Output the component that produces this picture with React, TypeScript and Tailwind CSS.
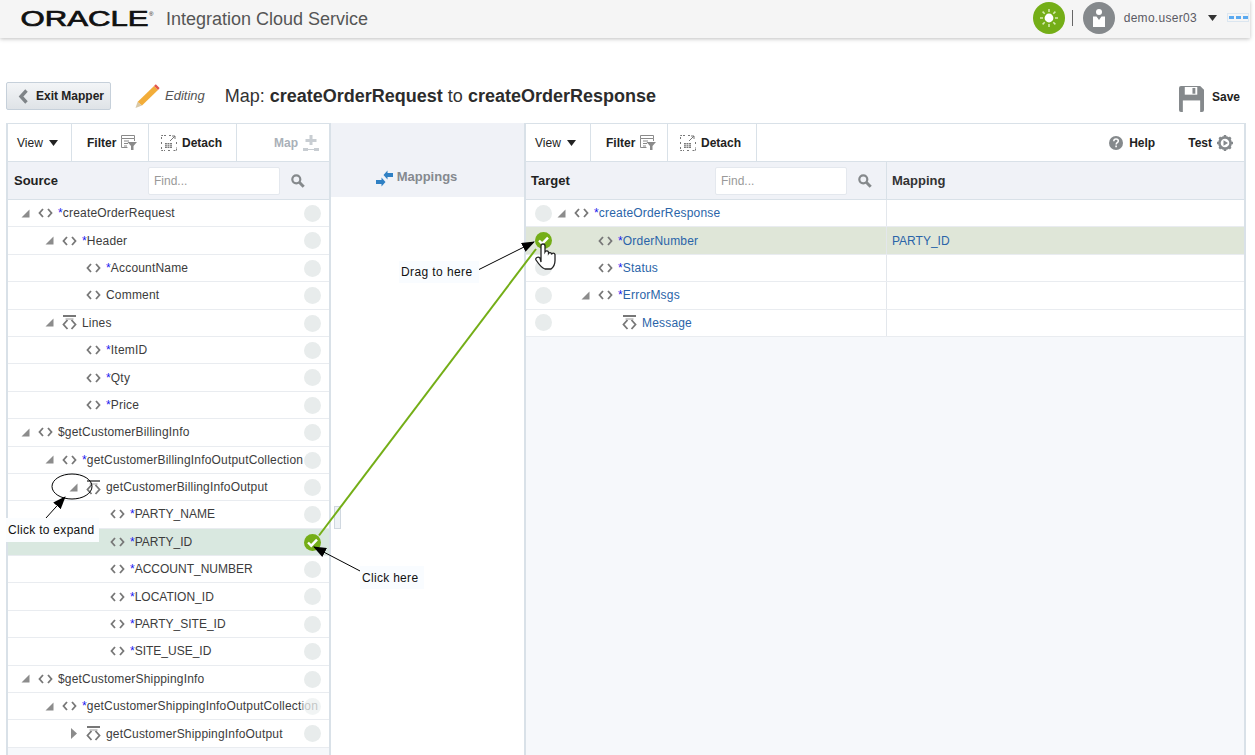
import { ReactNode } from 'react';

const FONT = "font-['Liberation_Sans',Arial,sans-serif]";

type TreeRow = {
  label: string;
  star?: boolean;
  level: number;
  arrow?: 'open' | 'closed';
  icon?: 'code' | 'list';
  active?: boolean;
  fade?: boolean;
};

const SOURCE_ROWS: TreeRow[] = [
  { label: 'createOrderRequest', star: true, level: 0, arrow: 'open' },
  { label: 'Header', star: true, level: 1, arrow: 'open' },
  { label: 'AccountName', star: true, level: 2 },
  { label: 'Comment', level: 2 },
  { label: 'Lines', level: 1, arrow: 'open', icon: 'list' },
  { label: 'ItemID', star: true, level: 2 },
  { label: 'Qty', star: true, level: 2 },
  { label: 'Price', star: true, level: 2 },
  { label: '$getCustomerBillingInfo', level: 0, arrow: 'open' },
  { label: 'getCustomerBillingInfoOutputCollection', star: true, level: 1, arrow: 'open' },
  { label: 'getCustomerBillingInfoOutput', level: 2, arrow: 'open', icon: 'list' },
  { label: 'PARTY_NAME', star: true, level: 3 },
  { label: 'PARTY_ID', star: true, level: 3, active: true },
  { label: 'ACCOUNT_NUMBER', star: true, level: 3 },
  { label: 'LOCATION_ID', star: true, level: 3 },
  { label: 'PARTY_SITE_ID', star: true, level: 3 },
  { label: 'SITE_USE_ID', star: true, level: 3 },
  { label: '$getCustomerShippingInfo', level: 0, arrow: 'open' },
  { label: 'getCustomerShippingInfoOutputCollection', star: true, level: 1, arrow: 'open', fade: true },
  { label: 'getCustomerShippingInfoOutput', level: 2, arrow: 'closed', icon: 'list' },
];

const TARGET_ROWS: (TreeRow & { mapping?: string })[] = [
  { label: 'createOrderResponse', star: true, level: 0, arrow: 'open' },
  { label: 'OrderNumber', star: true, level: 1, active: true, mapping: 'PARTY_ID' },
  { label: 'Status', star: true, level: 1 },
  { label: 'ErrorMsgs', star: true, level: 1, arrow: 'open' },
  { label: 'Message', level: 2, icon: 'list' },
];

const INDENT = ['pl-0', 'pl-[24px]', 'pl-[48px]', 'pl-[72px]'];

const CodeIcon = () => (
  <svg width="15" height="10" viewBox="0 0 15 10" className="shrink-0">
    <path d="M5 1 1.5 5 5 9M10 1l3.5 4L10 9" fill="none" stroke="#777" strokeWidth="1.8" />
  </svg>
);

const ListIcon = () => (
  <svg width="15" height="15" viewBox="0 0 15 15" className="shrink-0">
    <path d="M1 0h13v2H1z" fill="#777" />
    <path d="M3.5 4h8" stroke="#999" strokeWidth="1" />
    <path d="M5.5 5 1.5 9.5l4 4.5M9.5 5l4 4.5-4 4.5" fill="none" stroke="#777" strokeWidth="1.8" />
  </svg>
);

const Arrow = ({ kind }: { kind?: 'open' | 'closed' }) => (
  <span className="w-[17px] h-[10px] shrink-0 flex items-center">
    {kind === 'open' && (
      <svg width="9" height="9" viewBox="0 0 9 9">
        <path d="M8.5 0.5v8H0.5z" fill="#8c8c8c" />
      </svg>
    )}
    {kind === 'closed' && (
      <svg width="6" height="11" viewBox="0 0 6 11" className="ml-[2px]">
        <path d="M0 0l6 5.5L0 11z" fill="#8c8c8c" />
      </svg>
    )}
  </span>
);

const Dot = ({ checked }: { checked?: boolean }) =>
  checked ? (
    <svg width="17" height="17" viewBox="0 0 17 17">
      <circle cx="8.5" cy="8.5" r="8.5" fill="#74ae17" />
      <path d="M4 8.5l3.2 3.2L13 5.6" fill="none" stroke="#fff" strokeWidth="2.4" />
    </svg>
  ) : (
    <span className="block w-[17px] h-[17px] rounded-full bg-[#e8ecec]" />
  );

const RowLabel = ({ row, blue }: { row: TreeRow; blue?: boolean }) => (
  <div className={`flex items-center min-w-0 ${INDENT[row.level]}`}>
    <Arrow kind={row.arrow} />
    <span className="w-[20px] shrink-0 flex items-center">
      {row.icon === 'list' ? <ListIcon /> : <CodeIcon />}
    </span>
    <span
      className={`whitespace-nowrap text-[12px] ${row.label === row.label.toUpperCase() ? '' : 'tracking-[0.18px]'} ${
        blue ? 'text-[#2a64a8]' : 'text-[#3c3c3c]'
      }`}
    >
      {row.star && <span className="text-[#1a1aee]">*</span>}
      {row.label}
    </span>
  </div>
);

const SourceRow = ({ row }: { row: TreeRow }) => (
  <div className={`relative flex items-center h-[27.4px] shrink-0 pl-[13px] border-b border-[#e9ecf0] overflow-hidden ${row.active ? 'bg-[#d9e8e0]' : 'bg-white'}`}>
    <RowLabel row={row} />
    {row.fade && <span className="absolute right-0 top-0 bottom-0 w-[27px] bg-white/40" />}
    <span className={`absolute right-[8px] top-[5px] ${row.fade ? 'opacity-60' : ''}`}>
      <Dot checked={row.active} />
    </span>
  </div>
);

const TargetRow = ({ row }: { row: TreeRow & { mapping?: string } }) => (
  <div className={`flex h-[27.4px] shrink-0 border-b border-[#e9ecf0] ${row.active ? 'bg-[#dfe6d8]' : 'bg-white'}`}>
    <div className="w-[361px] flex items-center pl-[9px] border-r border-[#e3e7ec]">
      <span className="w-[22px] shrink-0 flex">
        <Dot checked={row.active} />
      </span>
      <RowLabel row={row} blue />
    </div>
    <div className="flex-1 flex items-center pl-[5px] text-[12px] text-[#2a64a8]">{row.mapping}</div>
  </div>
);

const ToolBtn = ({ children, className = '' }: { children: ReactNode; className?: string }) => (
  <div className={`flex items-center h-full border-r border-[#d9e1e8] text-[12px] font-bold text-[#222] ${className}`}>{children}</div>
);

const FilterIcon = () => (
  <svg width="16" height="15" viewBox="0 0 16 15" className="ml-[5px]">
    <path d="M.5.5h13v3H.5zM.5 3.5v9h6M3 6h5M3 8.5h4M3 11h3M13.5 3.5V6" fill="none" stroke="#8a8a8a" />
    <path d="M6.5 7H16l-3.5 4v4h-2.5v-4z" fill="#8a8a8a" />
  </svg>
);

const DetachIcon = () => (
  <svg width="16" height="16" viewBox="0 0 16 16" className="mr-[5px]">
    <path d="M.5 4V.5H5M8 .5h3M.5 7v3M.5 12v3.5H4M7 15.5h3M12.5 15.5h3V12M15.5 9V6" fill="none" stroke="#777" strokeDasharray="2 1" />
    <path d="M9 6l5-5M11 1h3v3" fill="none" stroke="#777" />
    <path d="M4 8h7v5H4z" fill="#777" />
    <path d="M4 9.6h7M4 11.3h7M6.3 8v5M8.6 8v5" stroke="#fff" strokeWidth=".6" />
  </svg>
);

const SearchIcon = () => (
  <svg width="14" height="14" viewBox="0 0 14 14" className="ml-[11px]">
    <circle cx="5.3" cy="5.3" r="4" fill="none" stroke="#85898c" strokeWidth="2.2" />
    <path d="M8.5 8.5l4.2 4.2" stroke="#85898c" strokeWidth="3" />
  </svg>
);

const Toolbar = ({ children }: { children: ReactNode }) => (
  <div className="flex items-center h-[38px] shrink-0 bg-white border-b border-[#d9e1e8]">{children}</div>
);

const ViewBtn = ({ width }: { width: string }) => (
  <ToolBtn className={`${width} pl-[9px]`}>
    <span className="font-normal">View</span>
    <svg width="9" height="6" viewBox="0 0 9 6" className="ml-[6px]">
      <path d="M0 0h9L4.5 6z" fill="#222" />
    </svg>
  </ToolBtn>
);

const FindBox = ({ width }: { width: string }) => (
  <div className={`h-[28px] ${width} bg-white border border-[#e4e8ee] rounded-[2px] flex items-center pl-[5px] text-[12px] text-[#999]`}>Find...</div>
);

export default function App() {
  return (
    <div className={`relative w-[1255px] h-[755px] overflow-hidden bg-white ${FONT}`}>
      <header className="w-[1250px] h-[38px] bg-[#f5f5f5] shadow-[0_1px_4px_rgba(0,0,0,0.25)] flex items-center pl-[21px]">
        <svg width="134" height="24" viewBox="0 0 134 24" className="shrink-0 overflow-visible">
          <text x="-0.5" y="19" fontSize="22" fontWeight="400" fill="#111" stroke="#111" strokeWidth="0.7" textLength="128" lengthAdjust="spacingAndGlyphs" fontFamily="Liberation Sans">ORACLE</text>
          <text x="128" y="9" fontSize="6" fill="#111" fontFamily="Liberation Sans">®</text>
        </svg>
        <span className="ml-[11px] text-[18px] text-[#555]">Integration Cloud Service</span>
        <div className="ml-auto mr-[1px] mb-[3px] flex items-center">
          <span className="w-[32px] h-[32px] rounded-full bg-[#74ae17] flex items-center justify-center">
            <svg width="20" height="20" viewBox="0 0 20 20">
              <circle cx="10" cy="10" r="4.4" fill="#fff" />
              <path d="M10 1v3M10 16v3M1 10h3M16 10h3M3.6 3.6l2.1 2.1M14.3 14.3l2.1 2.1M3.6 16.4l2.1-2.1M14.3 5.7l2.1-2.1" stroke="#d6ebb0" strokeWidth="1.5" />
            </svg>
          </span>
          <span className="ml-[7px] w-px h-[16px] bg-[#666]" />
          <span className="ml-[10px] w-[32px] h-[32px] rounded-full bg-[#85898c] flex items-center justify-center">
            <svg width="14" height="20" viewBox="0 0 14 20">
              <circle cx="7" cy="4" r="3" fill="#fff" />
              <path d="M1 8.5h3.5L7 12l2.5-3.5H13V19H1z" fill="#fff" />
            </svg>
          </span>
          <span className="ml-[9px] text-[12px] tracking-[0.3px] text-[#5a5a64]">demo.user03</span>
          <svg width="9" height="6" viewBox="0 0 9 6" className="ml-[11px]">
            <path d="M0 0h9L4.5 6z" fill="#333" />
          </svg>
          <span className="ml-[10px] w-[22px] h-[9px] border border-[#dbe6f0] flex items-center justify-center gap-[2px]">
            <span className="w-[5px] h-[3px] bg-[#5aa9f0]" />
            <span className="w-[5px] h-[3px] bg-[#5aa9f0]" />
            <span className="w-[5px] h-[3px] bg-[#5aa9f0]" />
          </span>
        </div>
      </header>

      <div className="flex items-center mt-[44px] h-[28px] pl-[6px] w-[1240px]">
        <button className="w-[105px] h-[28px] flex items-center pl-[11px] bg-gradient-to-b from-[#f3f5f7] to-[#dfe3e7] border border-[#c6d0da] rounded-[2px] text-[12px] font-bold text-[#222]">
          <svg width="11" height="15" viewBox="0 0 11 15" className="mr-[7px]">
            <path d="M8.5 1.5 3 7.5l5.5 6" fill="none" stroke="#7f8488" strokeWidth="3.4" />
          </svg>
          Exit Mapper
        </button>
        <svg width="26" height="26" viewBox="0 0 26 26" className="ml-[23px]">
          <path d="M20 3 24 7 8 22.5 3.5 19z" fill="#f2ad3a" />
          <path d="M20 3l1.8-1.8L25.6 5 24 7z" fill="#e2574c" />
          <path d="M3.5 19 8 22.5 1.5 25z" fill="#d9c9a8" />
        </svg>
        <span className="ml-[5px] text-[13px] italic text-[#555]">Editing</span>
        <span className="ml-[20px] text-[18px] text-[#333]">
          Map: <b className="text-[#2c2c2c]">createOrderRequest</b> to <b className="text-[#2c2c2c]">createOrderResponse</b>
        </span>
        <svg width="25" height="26" viewBox="0 0 26 27" className="ml-auto mt-[6px]">
          <path d="M2 0h20l4 4v21a2 2 0 0 1-2 2H2a2 2 0 0 1-2-2V2a2 2 0 0 1 2-2z" fill="#85898c" />
          <path d="M6 1h13v8H6z" fill="#fff" />
          <path d="M14 2h3v6h-3z" fill="#85898c" />
          <path d="M4 15h18v12H4z" fill="#fff" />
        </svg>
        <span className="ml-[8px] mt-[2px] text-[12px] font-bold text-[#222]">Save</span>
      </div>

      <div className="flex mt-[13px] ml-[6px] w-[1240px] h-[632px]">
        <section className="w-[325px] border-x-2 border-t border-[#d9e1e8] flex flex-col bg-[#f6f8fb]">
          <Toolbar>
            <ViewBtn width="w-[64px]" />
            <ToolBtn className="w-[77px] pl-[15px]">
              Filter
              <FilterIcon />
            </ToolBtn>
            <ToolBtn className="w-[88px] pl-[12px]">
              <DetachIcon />
              Detach
            </ToolBtn>
            <div className="flex-1 flex items-center justify-end pr-[10px] text-[12px] font-bold text-[#a9b0b8]">
              Map
              <svg width="16" height="16" viewBox="0 0 16 16" className="ml-[5px]">
                <path d="M6.5 0h3v4h4v3h-4v3h-3V7h-4V4h4zM0 13h5v3H0zM11 13h5v3h-5zM5 14h6v1H5z" fill="#c8cdd2" />
              </svg>
            </div>
          </Toolbar>
          <div className="h-[38px] shrink-0 flex items-center pl-[6px] bg-[#f0f2f7] border-b border-[#d9e1e8]">
            <span className="w-[134px] text-[13px] font-bold text-[#222]">Source</span>
            <FindBox width="w-[132px]" />
            <SearchIcon />
          </div>
          {SOURCE_ROWS.map((row) => (
            <SourceRow key={row.label} row={row} />
          ))}
        </section>

        <section className="w-[193px] flex flex-col">
          <div className="h-[74px] bg-[#f0f2f7] flex items-end justify-center pb-[11px] pr-[22px] text-[13px] font-bold text-[#85898f]">
            <svg width="17" height="17" viewBox="0 0 17 17" className="mr-[4px] mb-[-1px]">
              <path d="M7.5 5 11.5.5V3H17v4h-5.5v2.5zM9.5 12 5.5 16.5V14H0v-4h5.5V7.5z" fill="#2f80c4" />
            </svg>
            Mappings
          </div>
        </section>

        <section className="w-[722px] border-x-2 border-t border-[#d9e1e8] flex flex-col bg-[#f6f8fb]">
          <Toolbar>
            <ViewBtn width="w-[65px]" />
            <ToolBtn className="w-[77px] pl-[15px]">
              Filter
              <FilterIcon />
            </ToolBtn>
            <ToolBtn className="w-[89px] pl-[12px]">
              <DetachIcon />
              Detach
            </ToolBtn>
            <div className="flex-1 flex items-center justify-end pr-[11px] text-[12px] font-bold text-[#222]">
              <svg width="14" height="14" viewBox="0 0 14 14" className="mr-[6px]">
                <circle cx="7" cy="7" r="7" fill="#85898c" />
                <path d="M4.8 5.2C4.8 3.8 5.8 3 7 3s2.3.8 2.3 2c0 1.8-2.1 1.6-2.1 3.4" fill="none" stroke="#fff" strokeWidth="1.5" />
                <path d="M6.3 9.6h1.6v1.6H6.3z" fill="#fff" />
              </svg>
              Help
              <span className="ml-[33px]">Test</span>
              <svg width="16" height="16" viewBox="0 0 16 16" className="ml-[5px]">
                <circle cx="8" cy="8" r="5.6" fill="none" stroke="#85898c" strokeWidth="2.6" />
                <path d="M8 0v3M8 13v3M0 8h3M13 8h3M2.3 2.3l2.1 2.1M11.6 11.6l2.1 2.1M2.3 13.7l2.1-2.1M11.6 4.4l2.1-2.1" stroke="#85898c" strokeWidth="2.4" />
                <path d="M6.5 5.2 11 8l-4.5 2.8z" fill="#85898c" />
              </svg>
            </div>
          </Toolbar>
          <div className="h-[38px] shrink-0 flex items-center bg-[#f0f2f7] border-b border-[#d9e1e8]">
            <div className="w-[361px] h-full flex items-center pl-[5px] border-r border-[#d9e1e8]">
              <span className="w-[184px] text-[13px] font-bold text-[#222]">Target</span>
              <FindBox width="w-[132px]" />
              <SearchIcon />
            </div>
            <span className="pl-[5px] text-[13px] font-bold text-[#333]">Mapping</span>
          </div>
          {TARGET_ROWS.map((row) => (
            <TargetRow key={row.label} row={row} />
          ))}
        </section>
      </div>

      <span className="absolute left-[334px] top-[506px] w-[7px] h-[23px] bg-[#eef2f6] border border-[#d0d8e0]" />

      <svg width="1255" height="755" viewBox="0 0 1255 755" className="absolute left-0 top-0 pointer-events-none">
        <defs>
          <marker id="head" markerWidth="13" markerHeight="10" refX="12" refY="5" orient="auto" markerUnits="userSpaceOnUse">
            <path d="M0 0 13 5 0 10z" fill="#000" />
          </marker>
        </defs>
        <line x1="319" y1="535.5" x2="536" y2="249" stroke="#74ae17" strokeWidth="2" />
        <ellipse cx="72" cy="486.5" rx="20" ry="12.5" fill="none" stroke="#000" strokeWidth="1" />
        <line x1="46" y1="518" x2="65" y2="497" stroke="#000" markerEnd="url(#head)" />
        <line x1="362" y1="572" x2="314" y2="547" stroke="#000" markerEnd="url(#head)" />
        <line x1="478" y1="270" x2="534" y2="242" stroke="#000" markerEnd="url(#head)" />
        <path d="M541 262V246a2 2 0 0 1 4 0v6a2 2 0 0 1 3.5 0v1.5a1.8 1.8 0 0 1 3 0v1a1.8 1.8 0 0 1 3.5 0v6c0 4-2 7-4 8.5h-6c-3-1-7-6-9-9-1-2 2-4 4-2z" fill="#fff" stroke="#222" strokeWidth="1.3" />
      </svg>

      <span className="absolute left-[6px] top-[518px] h-[24px] w-[93px] flex items-center pl-[2px] bg-[#fbfdff] text-[12px] tracking-[0.3px] text-[#111]">Click to expand</span>
      <span className="absolute left-[360px] top-[566px] h-[23px] w-[64px] flex items-center pl-[2px] bg-[#f9fcff] text-[12px] tracking-[0.3px] text-[#111]">Click here</span>
      <span className="absolute left-[399px] top-[261px] h-[22px] w-[80px] flex items-center pl-[2px] bg-[#f9fcff] text-[12px] tracking-[0.4px] text-[#111]">Drag to here</span>
    </div>
  );
}
